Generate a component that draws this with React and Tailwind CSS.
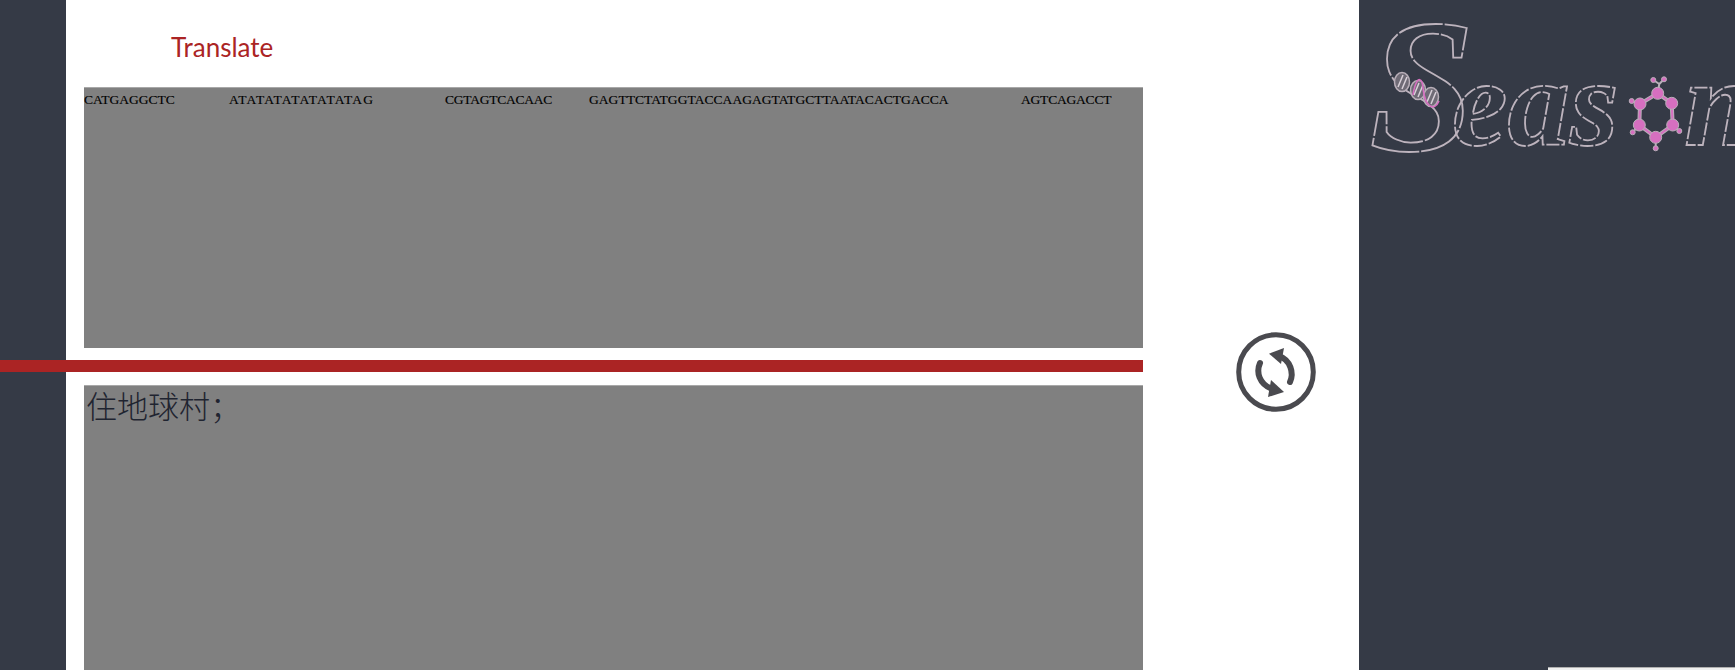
import React from 'react';

const sequences = [
  { text: 'CATGAGGCTC', className: 'w-[145px]' },
  { text: 'ATATATATATATATAG', className: 'w-[216px] tracking-[1.1px]' },
  { text: 'CGTAGTCACAAC', className: 'w-[144px] tracking-[-0.25px]' },
  { text: 'GAGTTCTATGGTACCAAGAGTATGCTTAATACACTGACCA', className: 'w-[432px] tracking-[0.05px]' },
  { text: 'AGTCAGACCT', className: 'tracking-[-0.2px]' },
];

const RefreshIcon = () => (
  <svg viewBox="0 0 80 80" className="w-[80px] h-[80px] shrink-0 mt-[332px] ml-[93px]">
    <circle cx="40" cy="40" r="37.3" fill="none" stroke="#4a4a4f" strokeWidth="5" />
    <path d="M54 50 C58 41 55 28 42 23.5" fill="none" stroke="#4a4a4f" strokeWidth="6" strokeLinecap="round" />
    <path d="M33 21.7 L48 16 L45 32 Z" fill="#4a4a4f" />
    <path d="M24 31 C20 40 23 52 36 57" fill="none" stroke="#4a4a4f" strokeWidth="6" strokeLinecap="round" />
    <path d="M48 60 L35 48 L32 65 Z" fill="#4a4a4f" />
  </svg>
);

const HelixBlob = ({ cx, cy }) => (
  <g>
    <ellipse cx={cx} cy={cy} rx="7.5" ry="9.5" fill="#6f6b76" stroke="#b9afb9" strokeWidth="1.5" />
    <path d={`M${cx - 4} ${cy + 5} L${cx + 1} ${cy - 7} M${cx} ${cy + 7} L${cx + 5} ${cy - 5}`} stroke="#d8d0d8" strokeWidth="1.5" />
  </g>
);

const Logo = () => {
  const ring = [[298.7, 93.3], [312.7, 103.3], [313.7, 125], [296.7, 137.3], [280.3, 125], [281, 104]];
  const nubs = [[272.7, 101], [320.3, 131], [273.7, 132.3], [296.7, 148.3], [294.3, 80], [305, 79.3]];
  const outline = { fill: 'none', stroke: '#bdb3bd', strokeWidth: 1.8 };
  return (
    <svg viewBox="0 0 376 170" className="w-[376px] h-[170px] shrink-0" style={{ fontFamily: '"Liberation Serif", serif' }}>
      <text x="10" y="150" fontSize="190" fontStyle="italic" fontWeight="bold" {...outline} strokeDasharray="45 2">S</text>
      <text x="93" y="145" fontSize="125" fontStyle="italic" fontWeight="bold" {...outline} strokeDasharray="13 2">eas</text>
      <text x="325" y="145" fontSize="125" fontStyle="italic" fontWeight="bold" {...outline} strokeDasharray="13 2">n</text>

      {/* dna helix */}
      <HelixBlob cx={43} cy={82} />
      <HelixBlob cx={59} cy={90} />
      <HelixBlob cx={72} cy={97} />
      <path d="M54 95 C56 82 60 76 63 82 C65 90 64 100 70 105 C74 109 78 106 80 101" fill="none" stroke="#d66fc0" strokeWidth="1.6" />

      {/* benzene ring */}
      <path d="M298.7 93.3 L312.7 103.3 L313.7 125 L296.7 137.3 L280.3 125 L281 104 Z" fill="none" stroke="#b9afb9" strokeWidth="4" />
      <path d="M298.7 93.3 L312.7 103.3 L313.7 125 L296.7 137.3 L280.3 125 L281 104 Z" fill="none" stroke="#d66fc0" strokeWidth="2" />
      <path d="M298.7 93.3 L300.3 84 M300.3 84 L294.3 80 M300.3 84 L305 79.3 M281 104 L272.7 101 M313.7 125 L320.3 131 M280.3 125 L273.7 132.3 M296.7 137.3 L296.7 148.3" stroke="#b9afb9" strokeWidth="2" />
      {ring.map(([cx, cy], i) => (
        <circle key={i} cx={cx} cy={cy} r="6" fill="#d66fc0" stroke="#b9afb9" />
      ))}
      {nubs.map(([cx, cy], i) => (
        <circle key={i} cx={cx} cy={cy} r="2.5" fill="#d66fc0" stroke="#b9afb9" />
      ))}
    </svg>
  );
};

const App = () => {
  return (
    <div className="flex w-[1735px] h-[670px] overflow-hidden bg-white">
      <div className="w-[66px] shrink-0 bg-[#353a46]"></div>

      <div className="flex w-[1293px] shrink-0 bg-white pl-[18px]">
        <div className="flex flex-col w-[1059px] shrink-0">
          <div className="h-[87px] pt-[32px] pl-[87px]">
            <h2 className="font-['Lato',sans-serif] text-[26px] leading-[30px] text-[#ab2424]">Translate</h2>
          </div>

          <div className="flex h-[261px] shrink-0 bg-[#808080] border-t border-[#a8a8a8] font-['Liberation_Serif',serif] text-[13.5px] leading-[24px] text-black [-webkit-text-stroke:0.15px_black]">
            {sequences.map((seq) => (
              <span key={seq.text} className={`shrink-0 ${seq.className}`}>{seq.text}</span>
            ))}
          </div>

          <div className="h-[12px] w-[1143px] shrink-0 mt-[12px] -ml-[84px] bg-[#ab2424]"></div>

          <div className="flex-1 mt-[13px] bg-[#808080] border-t border-[#a8a8a8] pl-[2px] font-['Noto_Sans_CJK_SC',sans-serif] font-light text-[31px] leading-[38px] text-[#1f2430]">
            住地球村；
          </div>
        </div>

        <RefreshIcon />
      </div>

      <div className="flex flex-col flex-1 min-w-0 overflow-hidden bg-[#353a46]">
        <Logo />
        <div className="mt-auto self-end w-[187px] h-[3px] bg-[#f0f0f0] border-t border-[#b0b0b0]"></div>
      </div>
    </div>
  );
};

export default App;
